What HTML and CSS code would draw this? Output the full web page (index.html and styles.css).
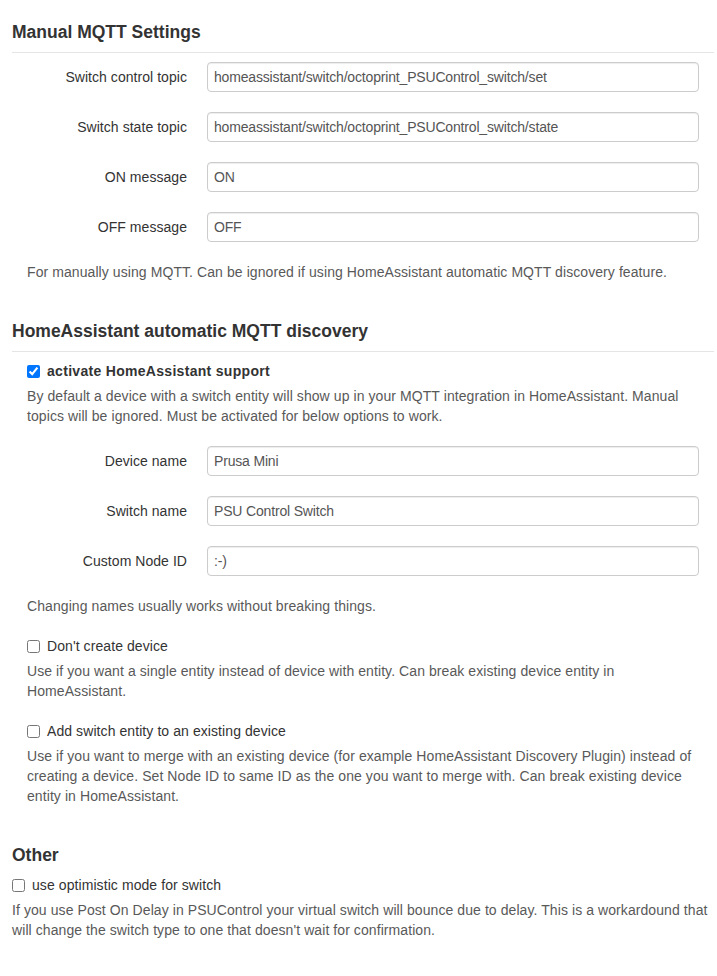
FILE: index.html
```html
<!DOCTYPE html>
<html>
<head>
<meta charset="utf-8">
<link rel="stylesheet" href="styles.css">
</head>
<body>
<div class="page">
  <section class="section">
    <h3 class="legend">Manual MQTT Settings</h3>
    <div class="indent">
      <div class="row"><label class="lbl">Switch control topic</label><input class="field" type="text" value="homeassistant/switch/octoprint_PSUControl_switch/set"></div>
      <div class="row"><label class="lbl">Switch state topic</label><input class="field" type="text" value="homeassistant/switch/octoprint_PSUControl_switch/state"></div>
      <div class="row"><label class="lbl">ON message</label><input class="field" type="text" value="ON"></div>
      <div class="row"><label class="lbl">OFF message</label><input class="field" type="text" value="OFF"></div>
      <p class="help flush">For manually using MQTT. Can be ignored if using HomeAssistant automatic MQTT discovery feature.</p>
    </div>
  </section>

  <section class="section">
    <h3 class="legend">HomeAssistant automatic MQTT discovery</h3>
    <div class="indent">
      <label class="check strong"><input type="checkbox" checked>activate HomeAssistant support</label>
      <p class="help">By default a device with a switch entity will show up in your MQTT integration in HomeAssistant. Manual topics will be ignored. Must be activated for below options to work.</p>
      <div class="rows-top">
        <div class="row"><label class="lbl">Device name</label><input class="field" type="text" value="Prusa Mini"></div>
        <div class="row"><label class="lbl">Switch name</label><input class="field" type="text" value="PSU Control Switch"></div>
        <div class="row"><label class="lbl">Custom Node ID</label><input class="field" type="text" value=":-)"></div>
      </div>
      <p class="help flush">Changing names usually works without breaking things.</p>
      <div class="option">
        <label class="check"><input type="checkbox">Don't create device</label>
        <p class="help">Use if you want a single entity instead of device with entity. Can break existing device entity in HomeAssistant.</p>
      </div>
      <div class="option">
        <label class="check"><input type="checkbox">Add switch entity to an existing device</label>
        <p class="help">Use if you want to merge with an existing device (for example HomeAssistant Discovery Plugin) instead of creating a device. Set Node ID to same ID as the one you want to merge with. Can break existing device entity in HomeAssistant.</p>
      </div>
    </div>
  </section>

  <section class="section">
    <h3 class="legend plain">Other</h3>
    <label class="check wide"><input type="checkbox">use optimistic mode for switch</label>
    <p class="help">If you use Post On Delay in PSUControl your virtual switch will bounce due to delay. This is a workardound that will change the switch type to one that doesn't wait for confirmation.</p>
  </section>
</div>
</body>
</html>
```

FILE: styles.css
```css
html, body {
  margin: 0;
  padding: 0;
  background: #ffffff;
}

body {
  font-family: "Liberation Sans", Arial, Helvetica, sans-serif;
  font-size: 14px;
  line-height: 20px;
  color: #333333;
}

.page {
  padding: 12px 3px 20px 12px;
}

.section + .section {
  margin-top: 29px;
}

.legend {
  margin: 0 0 9px 0;
  height: 40px;
  line-height: 40px;
  font-size: 17.5px;
  font-weight: bold;
  color: #333333;
  border-bottom: 1px solid #e5e5e5;
}

.legend.plain {
  border-bottom: none;
  margin-bottom: 0;
}

.indent {
  margin: 0 15px;
}

.row {
  display: flex;
  align-items: center;
  margin-bottom: 20px;
}

.lbl {
  width: 160px;
  flex: 0 0 160px;
  text-align: right;
  margin-right: 20px;
  color: #333333;
  letter-spacing: 0.05px;
}

.field {
  flex: 1 1 auto;
  min-width: 0;
  box-sizing: border-box;
  height: 30px;
  padding: 4px 6px;
  margin: 0;
  font-family: "Liberation Sans", Arial, Helvetica, sans-serif;
  font-size: 14px;
  line-height: 20px;
  letter-spacing: -0.17px;
  color: #555555;
  background: #ffffff;
  border: 1px solid #cccccc;
  border-radius: 4px;
  box-shadow: inset 0 1px 1px rgba(0, 0, 0, 0.075);
  outline: none;
}

.help {
  margin: 5px 0 0 0;
  color: #595959;
  letter-spacing: 0.08px;
}

.help.flush {
  margin-top: 0;
}

.rows-top {
  margin-top: 20px;
}

.option {
  margin-top: 20px;
}

.check {
  display: flex;
  align-items: center;
  gap: 7px;
  color: #333333;
  letter-spacing: 0.08px;
}

.check.strong {
  font-weight: bold;
  letter-spacing: 0.3px;
}

.check input {
  margin: 0;
  width: 13px;
  height: 13px;
  flex: 0 0 13px;
}
```
